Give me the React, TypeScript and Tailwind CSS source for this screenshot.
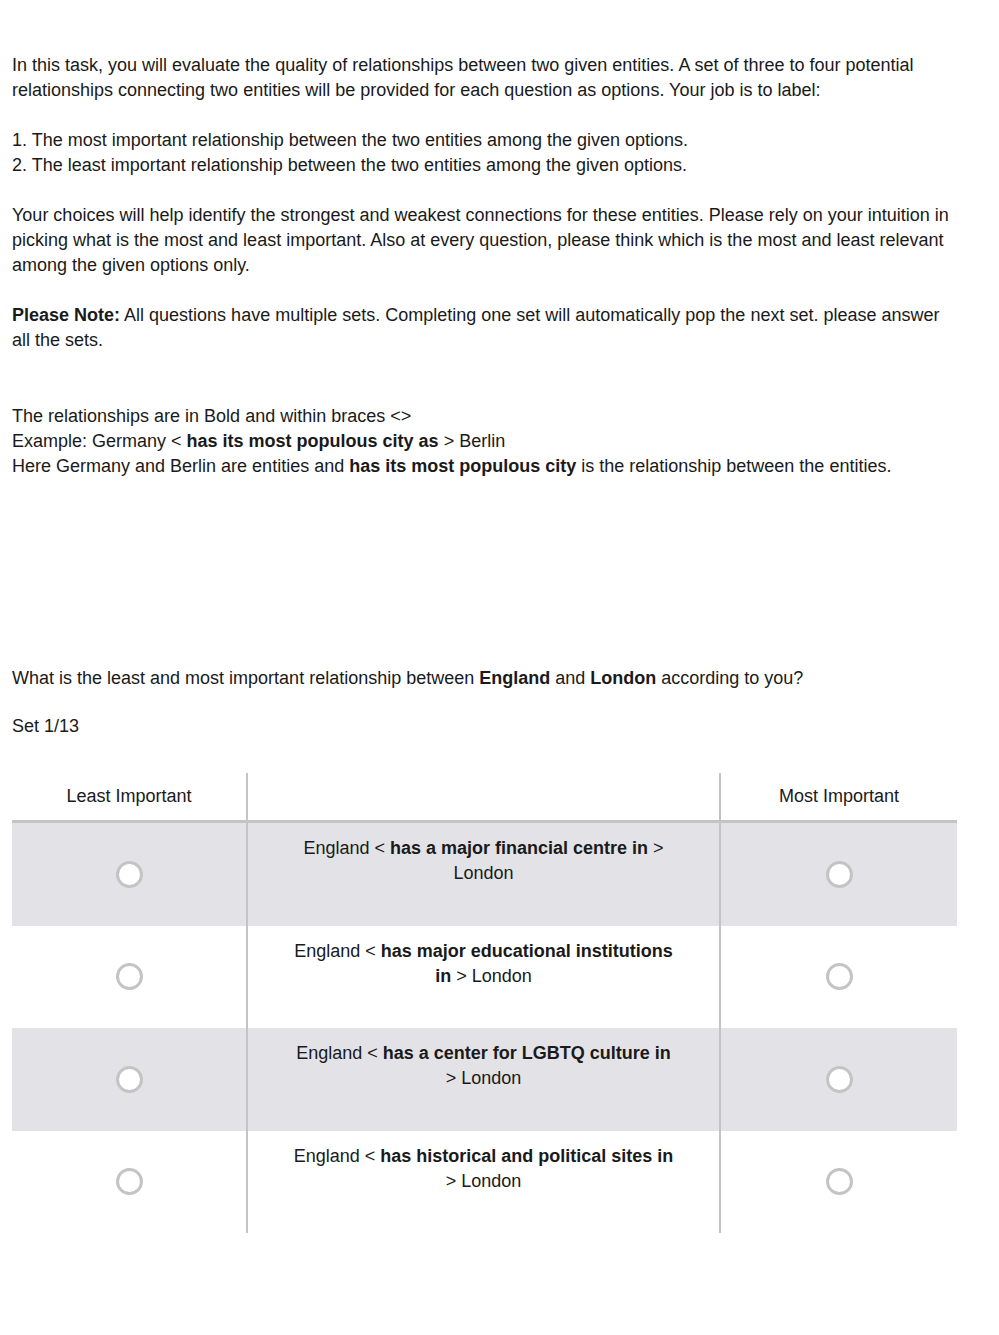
import React from "react"

const rows = [
  { pre: "England < ", rel: "has a major financial centre in", post: " > London", shaded: true },
  { pre: "England < ", rel: "has major educational institutions in", post: " > London", shaded: false },
  { pre: "England < ", rel: "has a center for LGBTQ culture in", post: " > London", shaded: true },
  { pre: "England < ", rel: "has historical and political sites in", post: " > London", shaded: false },
]

function Radio() {
  return <span className="block w-[27px] h-[27px] rounded-full border-[3px] border-[#c4c4c4] bg-white" />
}

export default function App() {
  return (
    <div className="bg-white min-h-[1335px] text-[#1a1a1a] text-[18px] leading-[25px] font-['Liberation_Sans',Arial,sans-serif]">
      <div className="pl-[12px] pr-[42px] pt-[53px]">
        <p>
          In this task, you will evaluate the quality of relationships between two given entities. A set of three to four potential
          relationships connecting two entities will be provided for each question as options. Your job is to label:
        </p>
        <p className="mt-[25px]">
          1. The most important relationship between the two entities among the given options.
          <br />
          2. The least important relationship between the two entities among the given options.
        </p>
        <p className="mt-[25px]">
          Your choices will help identify the strongest and weakest connections for these entities. Please rely on your intuition in
          picking what is the most and least important. Also at every question, please think which is the most and least relevant
          among the given options only.
        </p>
        <p className="mt-[25px]">
          <b>Please Note:</b> All questions have multiple sets. Completing one set will automatically pop the next set. please answer
          all the sets.
        </p>
        <p className="mt-[51px]">
          The relationships are in Bold and within braces &lt;&gt;
          <br />
          Example: Germany &lt; <b>has its most populous city as</b> &gt; Berlin
          <br />
          Here Germany and Berlin are entities and <b>has its most populous city</b> is the relationship between the entities.
        </p>
        <p className="mt-[187px]">
          What is the least and most important relationship between <b>England</b> and <b>London</b> according to you?
        </p>
        <p className="mt-[23px]">Set 1/13</p>
      </div>

      <div className="ml-[12px] mt-[34px] w-[945px]">
        <div className="grid grid-cols-[234px_475px_236px] h-[50px] border-b-[3px] border-[#c4c4c4]">
          <div className="flex items-center justify-center">Least Important</div>
          <div className="border-x-2 border-[#c4c4c4]" />
          <div className="flex items-center justify-center">Most Important</div>
        </div>
        {rows.map((r, i) => (
          <div
            key={i}
            className={`grid grid-cols-[234px_475px_236px] h-[102.5px] ${r.shaded ? "bg-[#e3e3e7]" : "bg-white"}`}
          >
            <div className="flex items-center justify-center">
              <Radio />
            </div>
            <div className="border-x-2 border-[#c4c4c4] px-[44px] pt-[13px] text-center">
              {r.pre}
              <b>{r.rel}</b>
              {r.post}
            </div>
            <div className="flex items-center justify-center">
              <Radio />
            </div>
          </div>
        ))}
      </div>
    </div>
  )
}
